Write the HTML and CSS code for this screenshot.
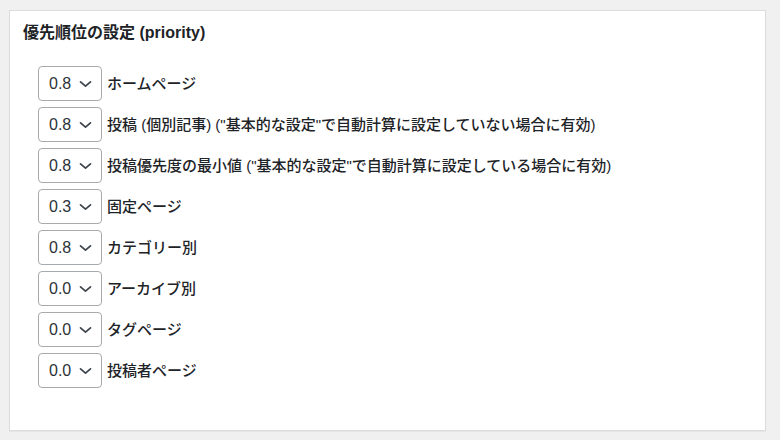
FILE: index.html
```html
<!DOCTYPE html>
<html lang="ja">
<head>
    <meta charset="UTF-8">
    <title>優先順位の設定</title>
    <link rel="stylesheet" href="styles.css">
</head>
<body>
    <div class="panel">
        <h3 class="panel-title">優先順位の設定 (priority)</h3>

        <ul class="priority-list">
            <li class="priority-row">
                <div class="select-box"><span>0.8</span><svg viewBox="0 0 13 8" width="13" height="8"><path d="M1.5 1.8 L6.5 6.2 L11.5 1.8" /></svg></div>
                <label>ホームページ</label>
            </li>
            <li class="priority-row">
                <div class="select-box"><span>0.8</span><svg viewBox="0 0 13 8" width="13" height="8"><path d="M1.5 1.8 L6.5 6.2 L11.5 1.8" /></svg></div>
                <label>投稿 (個別記事) ("基本的な設定"で自動計算に設定していない場合に有効)</label>
            </li>
            <li class="priority-row">
                <div class="select-box"><span>0.8</span><svg viewBox="0 0 13 8" width="13" height="8"><path d="M1.5 1.8 L6.5 6.2 L11.5 1.8" /></svg></div>
                <label>投稿優先度の最小値 ("基本的な設定"で自動計算に設定している場合に有効)</label>
            </li>
            <li class="priority-row">
                <div class="select-box"><span>0.3</span><svg viewBox="0 0 13 8" width="13" height="8"><path d="M1.5 1.8 L6.5 6.2 L11.5 1.8" /></svg></div>
                <label>固定ページ</label>
            </li>
            <li class="priority-row">
                <div class="select-box"><span>0.8</span><svg viewBox="0 0 13 8" width="13" height="8"><path d="M1.5 1.8 L6.5 6.2 L11.5 1.8" /></svg></div>
                <label>カテゴリー別</label>
            </li>
            <li class="priority-row">
                <div class="select-box"><span>0.0</span><svg viewBox="0 0 13 8" width="13" height="8"><path d="M1.5 1.8 L6.5 6.2 L11.5 1.8" /></svg></div>
                <label>アーカイブ別</label>
            </li>
            <li class="priority-row">
                <div class="select-box"><span>0.0</span><svg viewBox="0 0 13 8" width="13" height="8"><path d="M1.5 1.8 L6.5 6.2 L11.5 1.8" /></svg></div>
                <label>タグページ</label>
            </li>
            <li class="priority-row">
                <div class="select-box"><span>0.0</span><svg viewBox="0 0 13 8" width="13" height="8"><path d="M1.5 1.8 L6.5 6.2 L11.5 1.8" /></svg></div>
                <label>投稿者ページ</label>
            </li>
        </ul>
    </div>
</body>
</html>
```

FILE: styles.css
```css
body {
    margin: 0;
    padding: 10px 14px 10px 9px;
    background-color: #f0f0f1;
    font-family: "Liberation Sans", "Noto Sans CJK JP", sans-serif;
    color: #1d2327;
}

.panel {
    box-sizing: border-box;
    width: 757px;
    height: 421px;
    background-color: #fff;
    border: 1px solid #dcdcde;
    box-shadow: 0 1px 1px rgba(0, 0, 0, 0.04);
}

.panel-title {
    margin: 0;
    padding: 12px 13px 0;
    font-size: 16px;
    line-height: 20px;
    font-weight: bold;
}

.priority-list {
    list-style: none;
    margin: 0;
    padding: 23px 0 0 28px;
    display: flex;
    flex-direction: column;
    gap: 6px;
}

.priority-row {
    display: flex;
    align-items: center;
    gap: 5px;
    font-size: 15px;
    font-weight: 500;
}

.select-box {
    box-sizing: border-box;
    width: 64px;
    height: 35px;
    border: 1px solid #a7aaad;
    border-radius: 4px;
    display: flex;
    align-items: center;
    justify-content: space-between;
    padding: 0 9px 0 10px;
    font-size: 16px;
    font-weight: normal;
    color: #2c3338;
}

.select-box svg path {
    fill: none;
    stroke: #3c434a;
    stroke-width: 1.7;
    stroke-linecap: round;
    stroke-linejoin: round;
}

.priority-row label {
    color: #1d2327;
    padding-bottom: 3px;
}
```
